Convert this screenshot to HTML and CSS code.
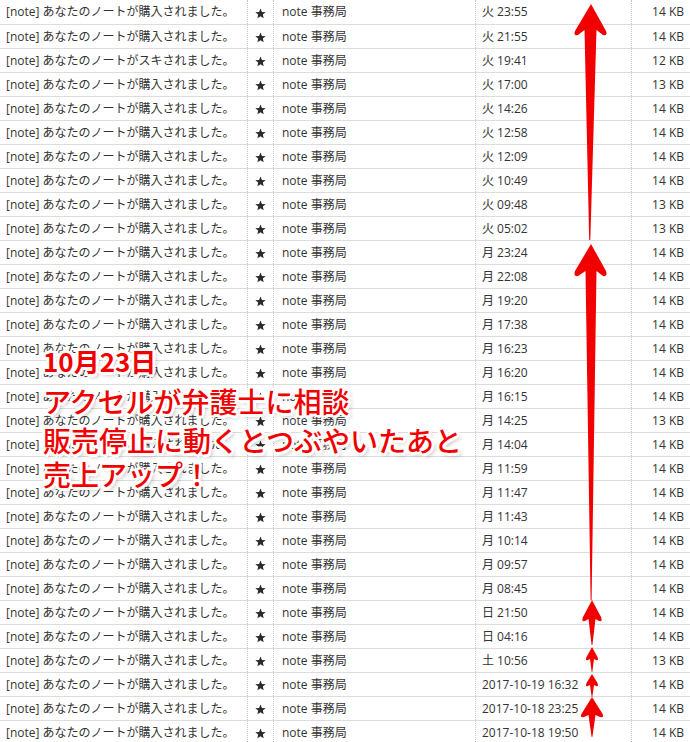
FILE: index.html
```html
<!DOCTYPE html>
<html lang="ja">
<head>
    <meta charset="UTF-8">
    <title>受信トレイ - note</title>
    <link rel="stylesheet" href="styles.css">
</head>
<body>
    <div class="inbox">
        <div class="mail-list">
            <div class="row"><div class="subject">[note] あなたのノートが購入されました。</div><div class="flag"><svg class="star" viewBox="0 0 10 10"><polygon points="5,0.4 6.3,3.6 9.7,3.8 7.1,6 7.9,9.4 5,7.6 2.1,9.4 2.9,6 0.3,3.8 3.7,3.6"/></svg></div><div class="from">note 事務局</div><div class="date">火 23:55</div><div class="size">14 KB</div></div>
            <div class="row"><div class="subject">[note] あなたのノートが購入されました。</div><div class="flag"><svg class="star" viewBox="0 0 10 10"><polygon points="5,0.4 6.3,3.6 9.7,3.8 7.1,6 7.9,9.4 5,7.6 2.1,9.4 2.9,6 0.3,3.8 3.7,3.6"/></svg></div><div class="from">note 事務局</div><div class="date">火 21:55</div><div class="size">14 KB</div></div>
            <div class="row"><div class="subject">[note] あなたのノートがスキされました。</div><div class="flag"><svg class="star" viewBox="0 0 10 10"><polygon points="5,0.4 6.3,3.6 9.7,3.8 7.1,6 7.9,9.4 5,7.6 2.1,9.4 2.9,6 0.3,3.8 3.7,3.6"/></svg></div><div class="from">note 事務局</div><div class="date">火 19:41</div><div class="size">12 KB</div></div>
            <div class="row"><div class="subject">[note] あなたのノートが購入されました。</div><div class="flag"><svg class="star" viewBox="0 0 10 10"><polygon points="5,0.4 6.3,3.6 9.7,3.8 7.1,6 7.9,9.4 5,7.6 2.1,9.4 2.9,6 0.3,3.8 3.7,3.6"/></svg></div><div class="from">note 事務局</div><div class="date">火 17:00</div><div class="size">13 KB</div></div>
            <div class="row"><div class="subject">[note] あなたのノートが購入されました。</div><div class="flag"><svg class="star" viewBox="0 0 10 10"><polygon points="5,0.4 6.3,3.6 9.7,3.8 7.1,6 7.9,9.4 5,7.6 2.1,9.4 2.9,6 0.3,3.8 3.7,3.6"/></svg></div><div class="from">note 事務局</div><div class="date">火 14:26</div><div class="size">14 KB</div></div>
            <div class="row"><div class="subject">[note] あなたのノートが購入されました。</div><div class="flag"><svg class="star" viewBox="0 0 10 10"><polygon points="5,0.4 6.3,3.6 9.7,3.8 7.1,6 7.9,9.4 5,7.6 2.1,9.4 2.9,6 0.3,3.8 3.7,3.6"/></svg></div><div class="from">note 事務局</div><div class="date">火 12:58</div><div class="size">14 KB</div></div>
            <div class="row"><div class="subject">[note] あなたのノートが購入されました。</div><div class="flag"><svg class="star" viewBox="0 0 10 10"><polygon points="5,0.4 6.3,3.6 9.7,3.8 7.1,6 7.9,9.4 5,7.6 2.1,9.4 2.9,6 0.3,3.8 3.7,3.6"/></svg></div><div class="from">note 事務局</div><div class="date">火 12:09</div><div class="size">14 KB</div></div>
            <div class="row"><div class="subject">[note] あなたのノートが購入されました。</div><div class="flag"><svg class="star" viewBox="0 0 10 10"><polygon points="5,0.4 6.3,3.6 9.7,3.8 7.1,6 7.9,9.4 5,7.6 2.1,9.4 2.9,6 0.3,3.8 3.7,3.6"/></svg></div><div class="from">note 事務局</div><div class="date">火 10:49</div><div class="size">14 KB</div></div>
            <div class="row"><div class="subject">[note] あなたのノートが購入されました。</div><div class="flag"><svg class="star" viewBox="0 0 10 10"><polygon points="5,0.4 6.3,3.6 9.7,3.8 7.1,6 7.9,9.4 5,7.6 2.1,9.4 2.9,6 0.3,3.8 3.7,3.6"/></svg></div><div class="from">note 事務局</div><div class="date">火 09:48</div><div class="size">13 KB</div></div>
            <div class="row"><div class="subject">[note] あなたのノートが購入されました。</div><div class="flag"><svg class="star" viewBox="0 0 10 10"><polygon points="5,0.4 6.3,3.6 9.7,3.8 7.1,6 7.9,9.4 5,7.6 2.1,9.4 2.9,6 0.3,3.8 3.7,3.6"/></svg></div><div class="from">note 事務局</div><div class="date">火 05:02</div><div class="size">13 KB</div></div>
            <div class="row"><div class="subject">[note] あなたのノートが購入されました。</div><div class="flag"><svg class="star" viewBox="0 0 10 10"><polygon points="5,0.4 6.3,3.6 9.7,3.8 7.1,6 7.9,9.4 5,7.6 2.1,9.4 2.9,6 0.3,3.8 3.7,3.6"/></svg></div><div class="from">note 事務局</div><div class="date">月 23:24</div><div class="size">14 KB</div></div>
            <div class="row"><div class="subject">[note] あなたのノートが購入されました。</div><div class="flag"><svg class="star" viewBox="0 0 10 10"><polygon points="5,0.4 6.3,3.6 9.7,3.8 7.1,6 7.9,9.4 5,7.6 2.1,9.4 2.9,6 0.3,3.8 3.7,3.6"/></svg></div><div class="from">note 事務局</div><div class="date">月 22:08</div><div class="size">14 KB</div></div>
            <div class="row"><div class="subject">[note] あなたのノートが購入されました。</div><div class="flag"><svg class="star" viewBox="0 0 10 10"><polygon points="5,0.4 6.3,3.6 9.7,3.8 7.1,6 7.9,9.4 5,7.6 2.1,9.4 2.9,6 0.3,3.8 3.7,3.6"/></svg></div><div class="from">note 事務局</div><div class="date">月 19:20</div><div class="size">14 KB</div></div>
            <div class="row"><div class="subject">[note] あなたのノートが購入されました。</div><div class="flag"><svg class="star" viewBox="0 0 10 10"><polygon points="5,0.4 6.3,3.6 9.7,3.8 7.1,6 7.9,9.4 5,7.6 2.1,9.4 2.9,6 0.3,3.8 3.7,3.6"/></svg></div><div class="from">note 事務局</div><div class="date">月 17:38</div><div class="size">14 KB</div></div>
            <div class="row"><div class="subject">[note] あなたのノートが購入されました。</div><div class="flag"><svg class="star" viewBox="0 0 10 10"><polygon points="5,0.4 6.3,3.6 9.7,3.8 7.1,6 7.9,9.4 5,7.6 2.1,9.4 2.9,6 0.3,3.8 3.7,3.6"/></svg></div><div class="from">note 事務局</div><div class="date">月 16:23</div><div class="size">14 KB</div></div>
            <div class="row"><div class="subject">[note] あなたのノートが購入されました。</div><div class="flag"><svg class="star" viewBox="0 0 10 10"><polygon points="5,0.4 6.3,3.6 9.7,3.8 7.1,6 7.9,9.4 5,7.6 2.1,9.4 2.9,6 0.3,3.8 3.7,3.6"/></svg></div><div class="from">note 事務局</div><div class="date">月 16:20</div><div class="size">14 KB</div></div>
            <div class="row"><div class="subject">[note] あなたのノートが購入されました。</div><div class="flag"><svg class="star" viewBox="0 0 10 10"><polygon points="5,0.4 6.3,3.6 9.7,3.8 7.1,6 7.9,9.4 5,7.6 2.1,9.4 2.9,6 0.3,3.8 3.7,3.6"/></svg></div><div class="from">note 事務局</div><div class="date">月 16:15</div><div class="size">14 KB</div></div>
            <div class="row"><div class="subject">[note] あなたのノートが購入されました。</div><div class="flag"><svg class="star" viewBox="0 0 10 10"><polygon points="5,0.4 6.3,3.6 9.7,3.8 7.1,6 7.9,9.4 5,7.6 2.1,9.4 2.9,6 0.3,3.8 3.7,3.6"/></svg></div><div class="from">note 事務局</div><div class="date">月 14:25</div><div class="size">13 KB</div></div>
            <div class="row"><div class="subject">[note] あなたのノートが購入されました。</div><div class="flag"><svg class="star" viewBox="0 0 10 10"><polygon points="5,0.4 6.3,3.6 9.7,3.8 7.1,6 7.9,9.4 5,7.6 2.1,9.4 2.9,6 0.3,3.8 3.7,3.6"/></svg></div><div class="from">note 事務局</div><div class="date">月 14:04</div><div class="size">14 KB</div></div>
            <div class="row"><div class="subject">[note] あなたのノートが購入されました。</div><div class="flag"><svg class="star" viewBox="0 0 10 10"><polygon points="5,0.4 6.3,3.6 9.7,3.8 7.1,6 7.9,9.4 5,7.6 2.1,9.4 2.9,6 0.3,3.8 3.7,3.6"/></svg></div><div class="from">note 事務局</div><div class="date">月 11:59</div><div class="size">14 KB</div></div>
            <div class="row"><div class="subject">[note] あなたのノートが購入されました。</div><div class="flag"><svg class="star" viewBox="0 0 10 10"><polygon points="5,0.4 6.3,3.6 9.7,3.8 7.1,6 7.9,9.4 5,7.6 2.1,9.4 2.9,6 0.3,3.8 3.7,3.6"/></svg></div><div class="from">note 事務局</div><div class="date">月 11:47</div><div class="size">14 KB</div></div>
            <div class="row"><div class="subject">[note] あなたのノートが購入されました。</div><div class="flag"><svg class="star" viewBox="0 0 10 10"><polygon points="5,0.4 6.3,3.6 9.7,3.8 7.1,6 7.9,9.4 5,7.6 2.1,9.4 2.9,6 0.3,3.8 3.7,3.6"/></svg></div><div class="from">note 事務局</div><div class="date">月 11:43</div><div class="size">14 KB</div></div>
            <div class="row"><div class="subject">[note] あなたのノートが購入されました。</div><div class="flag"><svg class="star" viewBox="0 0 10 10"><polygon points="5,0.4 6.3,3.6 9.7,3.8 7.1,6 7.9,9.4 5,7.6 2.1,9.4 2.9,6 0.3,3.8 3.7,3.6"/></svg></div><div class="from">note 事務局</div><div class="date">月 10:14</div><div class="size">14 KB</div></div>
            <div class="row"><div class="subject">[note] あなたのノートが購入されました。</div><div class="flag"><svg class="star" viewBox="0 0 10 10"><polygon points="5,0.4 6.3,3.6 9.7,3.8 7.1,6 7.9,9.4 5,7.6 2.1,9.4 2.9,6 0.3,3.8 3.7,3.6"/></svg></div><div class="from">note 事務局</div><div class="date">月 09:57</div><div class="size">14 KB</div></div>
            <div class="row"><div class="subject">[note] あなたのノートが購入されました。</div><div class="flag"><svg class="star" viewBox="0 0 10 10"><polygon points="5,0.4 6.3,3.6 9.7,3.8 7.1,6 7.9,9.4 5,7.6 2.1,9.4 2.9,6 0.3,3.8 3.7,3.6"/></svg></div><div class="from">note 事務局</div><div class="date">月 08:45</div><div class="size">14 KB</div></div>
            <div class="row"><div class="subject">[note] あなたのノートが購入されました。</div><div class="flag"><svg class="star" viewBox="0 0 10 10"><polygon points="5,0.4 6.3,3.6 9.7,3.8 7.1,6 7.9,9.4 5,7.6 2.1,9.4 2.9,6 0.3,3.8 3.7,3.6"/></svg></div><div class="from">note 事務局</div><div class="date">日 21:50</div><div class="size">14 KB</div></div>
            <div class="row"><div class="subject">[note] あなたのノートが購入されました。</div><div class="flag"><svg class="star" viewBox="0 0 10 10"><polygon points="5,0.4 6.3,3.6 9.7,3.8 7.1,6 7.9,9.4 5,7.6 2.1,9.4 2.9,6 0.3,3.8 3.7,3.6"/></svg></div><div class="from">note 事務局</div><div class="date">日 04:16</div><div class="size">14 KB</div></div>
            <div class="row"><div class="subject">[note] あなたのノートが購入されました。</div><div class="flag"><svg class="star" viewBox="0 0 10 10"><polygon points="5,0.4 6.3,3.6 9.7,3.8 7.1,6 7.9,9.4 5,7.6 2.1,9.4 2.9,6 0.3,3.8 3.7,3.6"/></svg></div><div class="from">note 事務局</div><div class="date">土 10:56</div><div class="size">13 KB</div></div>
            <div class="row"><div class="subject">[note] あなたのノートが購入されました。</div><div class="flag"><svg class="star" viewBox="0 0 10 10"><polygon points="5,0.4 6.3,3.6 9.7,3.8 7.1,6 7.9,9.4 5,7.6 2.1,9.4 2.9,6 0.3,3.8 3.7,3.6"/></svg></div><div class="from">note 事務局</div><div class="date">2017-10-19 16:32</div><div class="size">14 KB</div></div>
            <div class="row"><div class="subject">[note] あなたのノートが購入されました。</div><div class="flag"><svg class="star" viewBox="0 0 10 10"><polygon points="5,0.4 6.3,3.6 9.7,3.8 7.1,6 7.9,9.4 5,7.6 2.1,9.4 2.9,6 0.3,3.8 3.7,3.6"/></svg></div><div class="from">note 事務局</div><div class="date">2017-10-18 23:25</div><div class="size">14 KB</div></div>
            <div class="row"><div class="subject">[note] あなたのノートが購入されました。</div><div class="flag"><svg class="star" viewBox="0 0 10 10"><polygon points="5,0.4 6.3,3.6 9.7,3.8 7.1,6 7.9,9.4 5,7.6 2.1,9.4 2.9,6 0.3,3.8 3.7,3.6"/></svg></div><div class="from">note 事務局</div><div class="date">2017-10-18 19:50</div><div class="size">14 KB</div></div>
        </div>

        <!-- 注釈（矢印） -->
        <svg class="arrows" viewBox="0 0 690 742" width="690" height="742">
            <path d="M591 4 L606 31 Q608 36 603 35 L596.5 30 L590.3 240 L589.2 240 L584.5 30 L578 35 Q573 36 575 31 Z"/>
            <path d="M591 244 L606 271 Q608 277 603 276 L596.5 271 L591.6 600 L590.6 600 L585.5 271 L578 276 Q573 277 575 271 Z"/>
            <path d="M592 600 L601 617 Q603 622 599 621 L595.5 619 L592.4 645 L591.6 645 L588.5 619 L585 621 Q581 622 583 617 Z"/>
            <path d="M592 647 L597.5 657 Q599 661 596 660 L594 659 L592.3 672 L591.7 672 L590 659 L588 660 Q585 661 586.5 657 Z"/>
            <path d="M592 674 L597.5 683 Q599 687 596 686 L594 685 L592.3 697 L591.7 697 L590 685 L588 686 Q585 687 586.5 683 Z"/>
            <path d="M592 697 L602 713 Q605 718 600 717 L595.5 715 L592.4 737 L591.6 737 L588.5 715 L584 717 Q579 718 582 713 Z"/>
        </svg>

        <!-- 注釈（テキスト） -->
        <div class="note-text">
            <div class="note-date">10月23日</div>
            <div class="note-line l2">アクセルが弁護士に相談</div>
            <div class="note-line l3">販売停止に動くとつぶやいたあと</div>
            <div class="note-line l4">売上アップ！</div>
        </div>
    </div>
</body>
</html>
```

FILE: styles.css
```css
body {
    margin: 0;
    background-color: #fff;
    font-family: "Open Sans", "Noto Sans CJK JP", sans-serif;
    font-size: 12px;
    color: #333;
}

.inbox {
    position: relative;
    width: 690px;
    height: 742px;
    overflow: hidden;
}

.row {
    display: grid;
    grid-template-columns: 247px 26px 202px 156px 59px;
    height: 24px;
    line-height: 24px;
    white-space: nowrap;
}

.row + .row {
    border-top: 1px solid #dcdcdc;
    height: 23px;
    line-height: 23px;
}

.row > div {
    overflow: hidden;
}

.subject {
    padding-left: 6px;
}

.flag,
.from,
.date,
.size {
    border-left: 1px dotted #c8c8c8;
}

.flag {
    display: flex;
    align-items: center;
    justify-content: center;
}

.star {
    width: 11px;
    height: 11px;
    fill: #2b2b2b;
    margin-top: 2px;
}

.from {
    padding-left: 8px;
}

.date {
    padding-left: 6px;
}

.size {
    text-align: right;
    padding-right: 6px;
}

.arrows {
    position: absolute;
    top: 0;
    left: 0;
    fill: #f20000;
    pointer-events: none;
}

.note-text {
    position: absolute;
    top: 341px;
    left: 43px;
    font-family: "Noto Sans CJK JP", sans-serif;
    color: #f20000;
    white-space: nowrap;
    text-shadow: -2px -2px 0 #fff, 2px -2px 0 #fff, -2px 2px 0 #fff, 2px 2px 0 #fff,
                 0 -2px 0 #fff, 0 2px 0 #fff, -2px 0 0 #fff, 2px 0 0 #fff,
                 -1px -3px 0 #fff, 1px 3px 0 #fff, -3px 1px 0 #fff, 3px -1px 0 #fff,
                 3px 3px 4px rgba(0, 0, 0, 0.3);
}

.note-date {
    font-size: 26px;
    font-weight: bold;
    line-height: 40px;
}

.note-line {
    font-size: 28px;
    font-weight: 500;
}

.l2 {
    line-height: 40px;
}

.l3 {
    line-height: 38px;
}

.l4 {
    line-height: 30px;
}
```
